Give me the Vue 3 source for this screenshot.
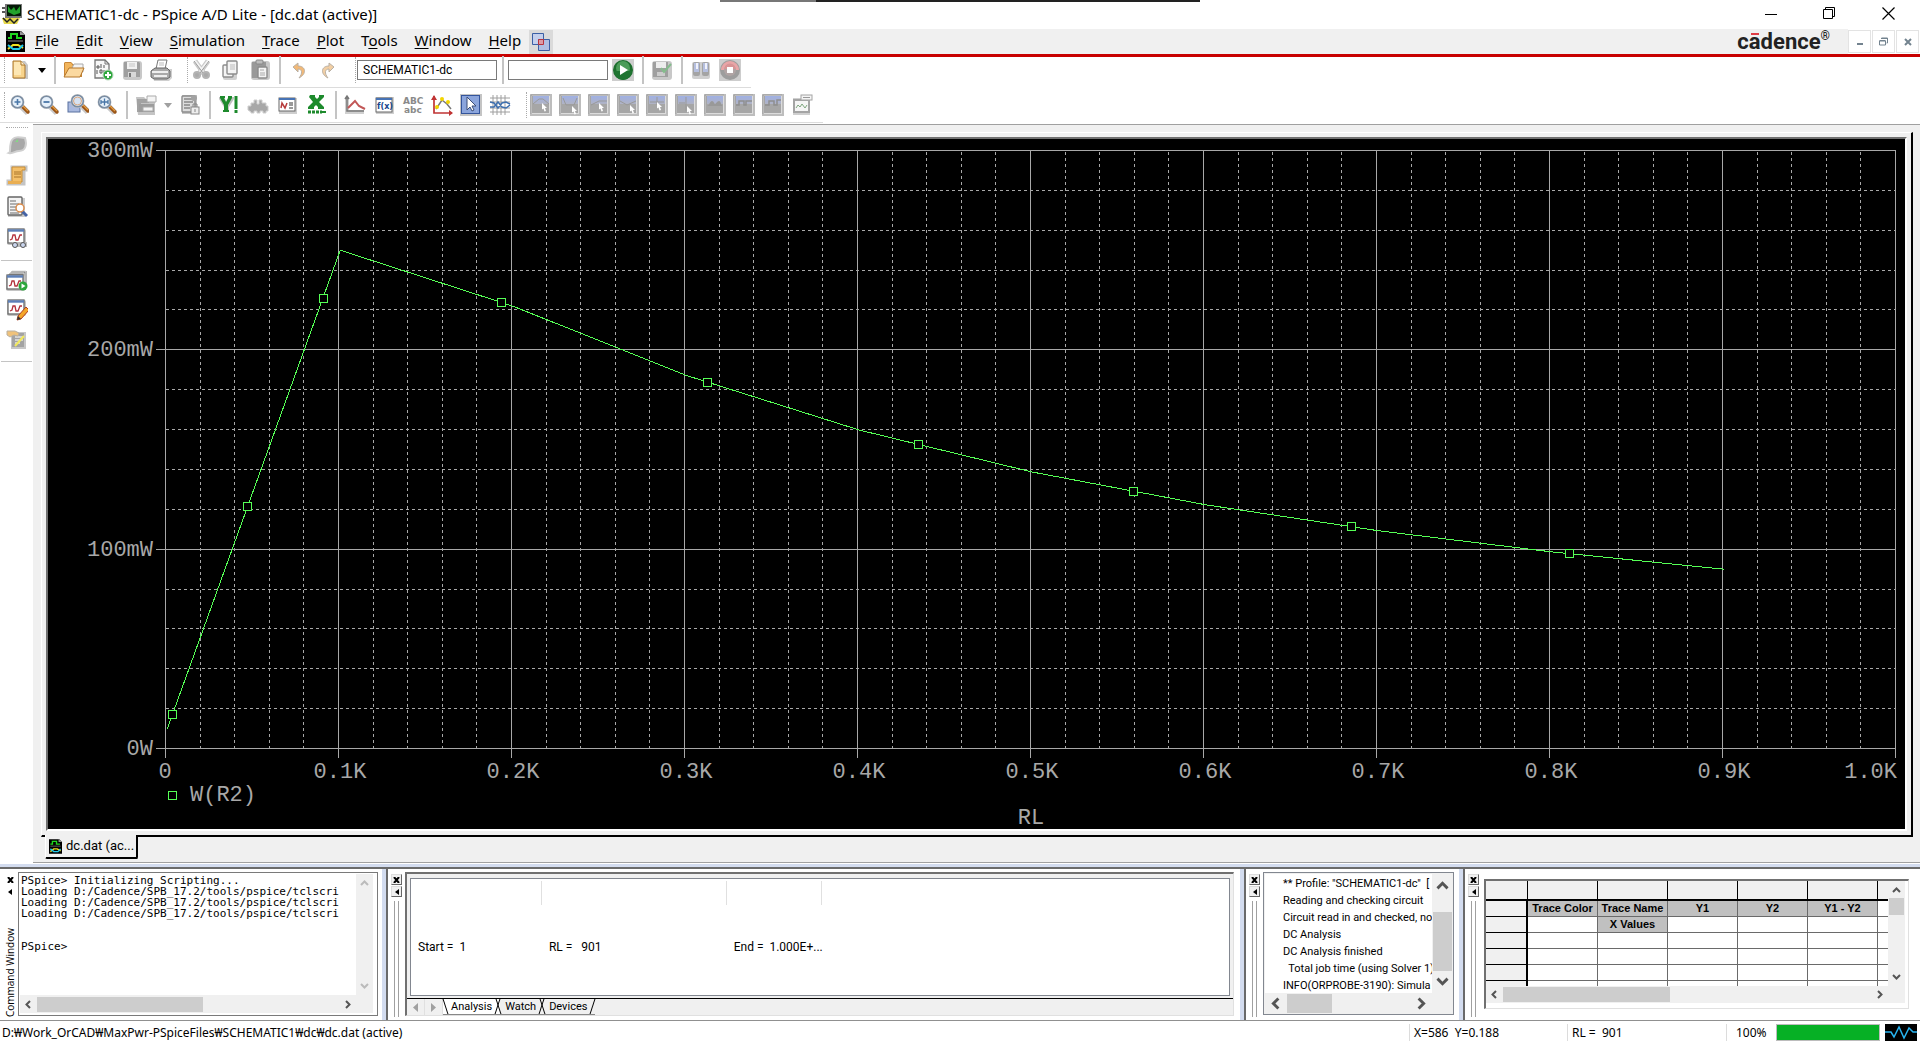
<script setup>
const menus = [
  ['', 'F', 'ile'], ['', 'E', 'dit'], ['', 'V', 'iew'], ['', 'S', 'imulation'], ['', 'T', 'race'],
  ['', 'P', 'lot'], ['T', 'o', 'ols'], ['', 'W', 'indow'], ['', 'H', 'elp']
]

const glass = '<path d="M12 12l7 7" stroke="#c9c9c9" stroke-width="6"/><path d="M13 12l6 6" stroke="#9a5518" stroke-width="3.4" stroke-linecap="round"/><path d="M14 12l5 5" stroke="#e39a3e" stroke-width="1.2"/><circle cx="8.500" cy="8" r="7" fill="#cfcfcf"/><circle cx="8.500" cy="8" r="5.800" fill="#e6f0fa" stroke="#7a8da3" stroke-width="1.600"/>'
const sheet = (x, y, w, h, f = '#f4f4f4', s = '#8c8c8c') => `<rect x="${x}" y="${y}" width="${w}" height="${h}" rx="1" fill="${f}" stroke="${s}" stroke-width="1.4"/>`
const wave = (x, y) => `<path d="M${x} ${y + 5}l2 -1l1 -4h2l1 5l2 0l2 -5l2 0" fill="none" stroke="#b3323c" stroke-width="1.3"/>`
const scope = (x, y) => `<rect x="${x - 1}" y="${y}" width="19" height="16" rx="2" fill="#c4c4c4"/><rect x="${x}" y="${y}" width="16" height="14" fill="#fff" stroke="#6b6b6b" stroke-width="1.3"/><path d="M${x} ${y + 1.5}h16" stroke="#5c7fb8" stroke-width="2.4"/>` + wave(x + 2, y + 6)
const cursorBox = (d) => `<rect width="22" height="22" fill="#bdbdbd"/><rect x="1.500" y="1.500" width="18" height="18" fill="#a6a6a6" stroke="#dcdcdc"/><path d="M1 1v19M1 1h19" stroke="#999"/><rect x="3" y="2" width="16" height="8" fill="url(#sky)"/>${d}`
const pointer = (x, y) => `<path d="M${x} ${y}l5 5h-2l1 3l-1.500 .5l-1 -3l-1.500 1z" fill="#fff"/>`

const icons = {
  blank: '<path d="M5 2h11l3 4v14h-14z" fill="#c8c8c8"/><path d="M4 2h8l4 4v13h-12z" fill="#f8d48c" stroke="#a8742c"/><path d="M5 3h6l1 3v10h-7z" fill="#fde7b4"/><path d="M12 2v4h4" fill="#fff3d6" stroke="#a8742c"/>',
  open: '<path d="M1 18V4l1 -1h6l2 2h9v13z" fill="#c98737"/><path d="M2 17V4h6l2 3h8v10z" fill="#f2b55c"/><path d="M9 9l2 -4h9v8z" fill="#f4f4f4" stroke="#aaa"/><path d="M1 18l5 -9h15l-4 9z" fill="#fbd9a0" stroke="#b5762b"/>',
  add: '<path d="M3 1h10l4 4v14h-14z" fill="#f7f7f7" stroke="#777" stroke-width="1.3"/><path d="M13 1v4h4" fill="none" stroke="#777"/><path d="M5 7h2v2h-2zM9 5v4M12 6v3M5 11v4M8 11h2v3h-2zM12 11v4" stroke="#555" fill="none"/><circle cx="16" cy="16" r="5" fill="#2da63c" stroke="#b9d9bd"/><path d="M16 13v6M13 16h6" stroke="#fff" stroke-width="2"/>',
  save: '<rect x="2" y="2" width="19" height="19" rx="3" fill="#c8c8c8"/><path d="M3 3h15l1 1v14h-16z" fill="#9f9f9f"/><path d="M6 3h10v7h-10z" fill="#f1f1f1"/><path d="M7 13h8v5h-8z" fill="#d8d8d8"/><path d="M8 14h2v4h-2z" fill="#777"/><path d="M8 5h6M8 7h6" stroke="#c5c5c5"/>',
  print: '<path d="M2 10h20v9l-3 3h-15z" fill="#cfcfcf"/><path d="M8 1h9l-2 9h-9z" fill="#fff" stroke="#777"/><path d="M9 4h5M9 6h5" stroke="#bbb"/><path d="M1 12l4 -3h12l3 3v6l-3 2h-13l-3 -2z" fill="#a9a9a9" stroke="#666"/><path d="M2 12h16v2h-16z" fill="#eee"/><path d="M4 17h13" stroke="#eee" stroke-width="2"/>',
  cut: '<path d="M4 2l10 14M17 2l-10 14" stroke="#c9c9c9" stroke-width="5"/><path d="M4 2l9 12M17 2l-9 12" stroke="#f4f4f4" stroke-width="2.500"/><path d="M3 2l9 12M18 2l-9 12" stroke="#999"/><circle cx="6" cy="16" r="3" fill="#aaa" stroke="#b4b4b4" stroke-width="2"/><circle cx="15" cy="16" r="3" fill="#aaa" stroke="#b4b4b4" stroke-width="2"/>',
  copy: '<rect x="3" y="6" width="14" height="15" rx="2" fill="#d0d0d0"/>' + sheet(3, 6, 10, 12) + sheet(7, 2, 10, 13) + '<path d="M10 6h5M10 8h5M10 10h5" stroke="#bbb"/>',
  paste: '<rect x="2" y="2" width="19" height="19" rx="3" fill="#c8c8c8"/><rect x="3" y="3" width="14" height="16" fill="#999"/><rect x="7" y="1" width="7" height="4" rx="1" fill="#bdbdbd" stroke="#888"/>' + sheet(9, 8, 9, 11) + '<path d="M11 11h4M11 14h5M11 16h5" stroke="#aaa"/>',
  undo: '<path d="M10 4l-5 4l5 5v-3c4 0 5 4 1 9c8 -4 7 -12 -1 -12z" fill="#f2b978" stroke="#b9b0a4"/>',
  redo: '<path d="M12 4l5 4l-5 5v-3c-4 0 -5 4 -1 9c-8 -4 -7 -12 1 -12z" fill="#f2cfa4" stroke="#b9b0a4"/>',
  run: '<rect width="22" height="22" fill="#cdcdcd"/><circle cx="11" cy="11" r="10" fill="#1c6e2d"/><circle cx="11" cy="9" r="7" fill="#4c9c59"/><path d="M2 12a9 9 0 0 0 18 0z" fill="#1f7431"/><path d="M8 6l8 5l-8 5z" fill="#fff"/>',
  check: '<rect x="1" y="2" width="20" height="19" rx="3" fill="#c8c8c8"/><path d="M2 3h15v15h-15z" fill="#9f9f9f"/><path d="M5 3h10v6h-10z" fill="#ededed"/><path d="M6 13h8v4h-8z" fill="#ccc"/><path d="M10 9l3 4l7 -8" fill="none" stroke="#84bd8c" stroke-width="2"/>',
  pause: '<rect x="2" y="3" width="18" height="17" rx="2" fill="#cfcfcf"/><rect x="3" y="3" width="7" height="14" rx="2" fill="#a4a4a4"/><rect x="12" y="3" width="7" height="14" rx="2" fill="#a4a4a4"/><path d="M4 4h5v9h-5zM13 4h5v9h-5z" fill="#b5bfdf"/><path d="M6 4h2v6h-2zM15 4h2v6h-2z" fill="#f1f3fb"/>',
  stop: '<rect width="22" height="22" fill="#cdcdcd"/><circle cx="11" cy="11" r="10" fill="#9d9d9d"/><path d="M2 11a9 9 0 0 1 18 0z" fill="#e9a5a7"/><circle cx="11" cy="11" r="6" fill="#b0a4a4"/><path d="M5.500 10a5.500 5.500 0 0 1 11 0z" fill="#d99496"/><rect x="8" y="8" width="6" height="6" fill="#fff"/>',
  zin: glass + '<path d="M8.500 5v6M5.500 8h6" stroke="#4a77a8" stroke-width="1.600"/>',
  zout: glass + '<path d="M5.500 8h6" stroke="#4a77a8" stroke-width="1.800"/>',
  zarea: '<rect x="1" y="8" width="12" height="10" fill="#a9b9df" stroke="#58709f"/>' + '<g transform="translate(2 -1)">' + glass + '<circle cx="8.500" cy="8" r="4" fill="#d6e2f2" stroke="#d98b4b" stroke-width=".7"/></g>',
  zfit: glass + '<path d="M5 8h7M8.500 4.500v7M5 6v4M12 6v4" stroke="#4a77a8" stroke-width="1.300"/>',
  scroll: '<path d="M1 3h8l2 2h9v16h-17z" fill="#c4c4c4"/><path d="M2 5h12v4h-8v9h-4z" fill="#a2a2a2"/><path d="M4 10h15v8h-15z" fill="#9c9c9c"/><path d="M12 2h9v6h-9z" fill="#f4f4f4" stroke="#aaa"/><path d="M8 13h10v4h-10z" fill="#f4f4f4" stroke="#aaa"/>',
  lock: '<path d="M3 1h15v19h-15z" fill="#c4c4c4"/>' + sheet(3, 2, 13, 16, '#ddd') + '<path d="M5 5h9M5 8h9M5 11h6M5 14h6" stroke="#888" stroke-width="1.5"/><circle cx="15" cy="4" r="3" fill="#a2a2a2"/><rect x="12" y="13" width="8" height="7" fill="#eee" stroke="#888"/><path d="M14 13v-3h4v3M16 15v3" fill="none" stroke="#888"/>',
  ymark: '<path d="M1 3h6v2l2 4l2 -4v-2h5v2l-5 8v5h-5v-5l-5 -8z" fill="#c2c2c2"/><path d="M2 2h5v2h-1l2 4l2 -4v-2h4v2l-4 7v5h1v2h-6v-2h1v-5l-4 -7z" fill="#1d8a2c"/><path d="M18 2v13" stroke="#1d8a2c" stroke-width="3"/><path d="M18 16v3" stroke="#1d8a2c" stroke-width="3"/>',
  hill: '<path d="M1 16v-4h3v-3h3v-3h3v4h2v-4h3v3h4v3h2v5h-2v2h-3v-2h-3v2h-3v-2h-3v2h-3v-1z" fill="#a8a8a8" stroke="#cfcfcf"/>',
  ncalc: '<rect x="3" y="4" width="18" height="16" fill="#cecece"/><rect x="3" y="4" width="16" height="13" fill="#fff" stroke="#666"/><path d="M3 5h16" stroke="#4773b5" stroke-width="2"/><path d="M5 14l1 -5l3 5l2 -5" fill="none" stroke="#b73b3b" stroke-width="1.500"/><path d="M13 9h4M13 11h4M13 14h4" stroke="#333"/>',
  xmark: '<path d="M5 1h5v2l2 2l2 -2v-2h5v2l-5 5l5 5v2h-6v-2l-2 -2l-2 2v2h-6v-2l5 -5l-4 -5z" fill="#1d8a2c"/><path d="M3 18h14" stroke="#1d8a2c" stroke-width="3" stroke-dasharray="3 1"/><path d="M17 18h4" stroke="#1d8a2c" stroke-width="2"/>',
  trace: '<path d="M3 4v14h17" fill="none" stroke="#d0d0d0" stroke-width="4"/><path d="M3 3v14h17M1 5l2 -3l2 3" fill="none" stroke="#777" stroke-width="1.500"/><path d="M4 14l7 -7l4 5l6 3" fill="none" stroke="#c25757" stroke-width="2"/>',
  abc: '<g font-family="DejaVu Sans" font-weight="bold" fill="#8a8a8a"><text x="1" y="10" font-size="9">ABC</text><text x="2" y="19" font-size="9">abc</text></g>',
  fx: '<rect x="3" y="3" width="18" height="17" fill="#cfcfcf"/><rect x="3" y="4" width="16" height="14" fill="#fff" stroke="#666"/><path d="M3 5h16" stroke="#4773b5" stroke-width="2"/><text x="4" y="15" font-size="8" font-weight="bold" font-family="DejaVu Sans" fill="#17478e">f(x)</text>',
  mark: '<path d="M3 2v17h18" fill="none" stroke="#c03434" stroke-width="1.700"/><path d="M0 6l3 -5l3 5zM18 16l4 3l-4 3z" fill="#c03434"/><path d="M5 15l6 -9l5 4l4 5" fill="none" stroke="#777" stroke-width="1.500"/><circle cx="6" cy="13" r="2" fill="#f3d500"/><circle cx="11" cy="5" r="2" fill="#f3d500"/><circle cx="17" cy="8" r="2" fill="#f3d500"/>',
  cursor: '<rect width="22" height="22" fill="#c4c4c4"/><rect x="1.500" y="1.500" width="18" height="18" fill="#8ba5dc" stroke="#33549b"/><path d="M7 3v13l3 -3l2 4l2 -1l-2 -4h4z" fill="#fff" stroke="#3a4d77"/>',
  grid: '<path d="M4 1v20M8 1v20M12 1v20M16 1v20M1 4h20M1 8h20M1 14h20M1 18h20" stroke="#9e9e9e"/><path d="M1 8l4 1l4 5l4 -5l4 -1l4 2M1 13l4 0l4 -5l4 5l4 1l4 -3" fill="none" stroke="#3e6fae" stroke-width="1.500"/>',
  cur0: cursorBox('<path d="M3 10l6 -5h4l6 5" fill="none" stroke="#999"/>' + pointer(12, 9)),
  cur1: cursorBox('<path d="M4 4l3 7h8l3 -7" fill="none" stroke="#999"/>' + pointer(13, 12)),
  cur2: cursorBox('<path d="M3 11l8 -4h8" fill="none" stroke="#999"/>' + pointer(11, 9)),
  cur3: cursorBox('<path d="M3 7l7 4l9 -4" fill="none" stroke="#999"/>' + pointer(13, 11)),
  cur4: cursorBox('<path d="M4 8h14M11 3v8" fill="none" stroke="#999"/>' + pointer(11, 8)),
  cur5: cursorBox('<path d="M11 3v14M4 9h6" fill="none" stroke="#999"/>' + pointer(12, 12)),
  cur6: cursorBox('<path d="M3 12c2 0 3 -5 5 -5s2 3 3 3s2 -3 4 -3s2 5 4 5" fill="#999"/>'),
  cur7: cursorBox('<path d="M3 11h3v-4h5v4h2v-4h6" fill="none" stroke="#8f8f8f" stroke-width="1.500"/>'),
  cur8: cursorBox('<path d="M3 11h4v-4h5v4h3v-5h4" fill="none" stroke="#8f8f8f" stroke-width="1.500"/>'),
  label: '<path d="M2 4h17v17h-17z" fill="#cfcfcf"/><rect x="3" y="6" width="15" height="12" fill="#f5f5f5" stroke="#a4a4a4" stroke-width="2"/><path d="M5 14l2 -3l2 2l2 -3l3 4l2 -3" fill="none" stroke="#7fa77f"/><rect x="10" y="1" width="11" height="5" fill="#f5f5f5" stroke="#a4a4a4"/><path d="M12 3.500h7" stroke="#999"/>',
  leaf: '<path d="M3 19c2 -1 0 -3 2 -11c2 -6 8 -5 14 -4c2 6 1 13 -6 13c-4 0 -6 3 -10 2z" fill="#a8a8a8" stroke="#d0d0d0" stroke-width="2"/><path d="M9 8l3 -3v3z" fill="#84d884"/>',
  parch: '<path d="M6 2h14v3h-2v14h-16v-3h4z" fill="#c4c4c4" stroke="#c4c4c4" stroke-width="3"/><path d="M6 2h13v3h-3v12h-10z" fill="#f4bf68" stroke="#c78d36"/><path d="M2 16h13v3h-13z" fill="#e9ae52"/><path d="M8 7h7M8 9h7M8 12h7" stroke="#a97528"/>',
  find: '<rect x="2" y="2" width="17" height="19" fill="#ccc"/>' + sheet(2, 1, 14, 18, '#f4f4f4', '#666') + '<path d="M4 5h6M4 8h9M4 11h7M4 14h7M4 17h9" stroke="#999" stroke-width="1.500"/><path d="M16 15l5 5" stroke="#4463a5" stroke-width="3"/><circle cx="14" cy="12" r="4" fill="#fff" stroke="#d98b4b" stroke-width="1.500"/>',
  view: scope(2, 2) + '<path d="M6 15h15v5h-13z" fill="#bbb"/><circle cx="9" cy="18" r="2.500" fill="#cad5ee" stroke="#555"/><circle cx="17" cy="18" r="2.500" fill="#cad5ee" stroke="#555"/>',
  sims: '<path d="M1 7l5 -5h15v14l-3 3h-17z" fill="#8c8c8c"/><path d="M4 4h14v13M6 2h14v13" fill="none" stroke="#ddd"/>' + scope(1, 6) + '<circle cx="17" cy="17" r="4.500" fill="#2da63c"/><path d="M15.500 14.500l4 2.500l-4 2.500z" fill="#fff"/>',
  edit: scope(2, 1) + '<path d="M11 21l1 -4l8 -9l3 3l-8 9z" fill="#f4a62a" stroke="#b13f22"/><path d="M11 21l1 -4l3 3z" fill="#333"/>',
  notes: '<path d="M5 3h15v17h-15z" fill="#c7c7c7"/><path d="M6 4h12v14h-12z" fill="#a3a3a3"/><path d="M9 8h8M9 11h8M9 14h5" stroke="#e4e4e4" stroke-width="1.500"/><path d="M1 2h8l4 2l-1 3l-4 -1l-4 2l-3 -2z" fill="#f0c27a" stroke="#b8b0a2"/><path d="M9 17l9 -10" stroke="#f2e95c" stroke-width="2"/>'
}

const fileTools = ['blank', '>', '|', 'open', 'add', 'save', 'print', ':', 'cut', 'copy', 'paste', '|', 'undo', 'redo']
const plotTools = ['zin', 'zout', 'zarea', 'zfit', '|', 'scroll', '>>', 'lock', '|', 'ymark', 'hill', 'ncalc', 'xmark', '|', 'trace', 'fx', 'abc', 'mark', 'cursor', 'grid', ':', 'cur0', 'cur1', 'cur2', 'cur3', 'cur4', 'cur5', 'cur6', 'cur7', 'cur8', 'label']
const sideTools = ['leaf', 'parch', 'find', 'view', '-', 'sims', 'edit', 'notes', '-']

const left = 117, base = 609, perStep = 173, perHundred = 598 / 3
const px = (r) => left + (r * perStep) / 100
const py = (mw) => base - (mw * perHundred) / 100
const minorX = Array.from({ length: 50 }, (_, i) => i).filter((i) => i % 5).map((i) => Math.round(px(i * 20)) + 0.5)
const minorY = Array.from({ length: 15 }, (_, i) => i).filter((i) => i % 5).map((i) => Math.round(py(i * 20)) + 0.5)
const majorX = Array.from({ length: 11 }, (_, i) => Math.round(px(i * 100)) + 0.5)
const majorY = [0, 1, 2, 3].map((i) => ({ y: Math.round(py(i * 100)) + 0.5, label: i ? i + '00mW' : '0W' }))
const xLabels = Array.from({ length: 9 }, (_, i) => ({ x: px((i + 1) * 100) + 2, label: `0.${i + 1}K` }))
const curve = Array.from({ length: 10 }, (_, i) => 1 + i * 100)
  .map((r) => `${px(r) + 0.5},${py((100000 * r) / (r + 100) ** 2) + 0.5}`).join(' ')
const markers = [[124, 575], [199, 367], [275, 159], [453, 163], [659, 243], [870, 305], [1085, 352], [1303, 387], [1521, 414], [124, 656]]

const consoleText = `PSpice> Initializing Scripting...
Loading D:/Cadence/SPB_17.2/tools/pspice/tclscri
Loading D:/Cadence/SPB_17.2/tools/pspice/tclscri
Loading D:/Cadence/SPB_17.2/tools/pspice/tclscri


PSpice>`
const log = ['** Profile: "SCHEMATIC1-dc"  [', 'Reading and checking circuit', 'Circuit read in and checked, no', 'DC Analysis', 'DC Analysis finished', '  Total job time (using Solver 1)', 'INFO(ORPROBE-3190): Simula']
</script>

<template>
  <div class="app">
    <svg class="defs" width="0" height="0" aria-hidden="true">
      <linearGradient id="sky" x2="0" y2="1"><stop offset="0" stop-color="#9fb0e4" /><stop offset="1" stop-color="#b0b3c4" /></linearGradient>
      <symbol id="doc" viewBox="0 0 19 21">
        <path d="M0 0h15l4 4v17h-19z" fill="#000" /><path d="M14 0v4h5" fill="#999" />
        <path d="M2 7h3v-4h6v4h5" fill="none" stroke="#1fd61f" stroke-width="2" />
        <path d="M2 10h15" stroke="#888" /><path d="M2 18l5 -4h5l5 3" fill="none" stroke="#f0e020" stroke-width="2" />
        <path d="M2 14l5 4h6l4 -4" fill="none" stroke="#20c8e8" stroke-width="2" />
      </symbol>
      <symbol id="up" viewBox="0 0 9 6"><path d="M1 5l3.500 -3.500l3.500 3.500" fill="none" stroke="currentColor" stroke-width="2" /></symbol>
      <symbol id="down" viewBox="0 0 9 6"><path d="M1 1l3.500 3.500l3.500 -3.500" fill="none" stroke="currentColor" stroke-width="2" /></symbol>
      <symbol id="prev" viewBox="0 0 6 9"><path d="M5 1l-3.500 3.500l3.500 3.500" fill="none" stroke="currentColor" stroke-width="2" /></symbol>
      <symbol id="next" viewBox="0 0 6 9"><path d="M1 1l3.500 3.500l-3.500 3.500" fill="none" stroke="currentColor" stroke-width="2" /></symbol>
      <symbol id="cross" viewBox="0 0 7 6"><path d="M1 0l5 6M6 0l-5 6" stroke="#000" stroke-width="2" /></symbol>
      <symbol id="tri" viewBox="0 0 4 6"><path d="M4 0v6l-4 -3z" fill="#000" /></symbol>
    </svg>

    <header class="title">
      <svg width="20" height="20" viewBox="0 0 20 20"><rect x="3" y="0" width="17" height="14" fill="#777" /><rect x="5" y="1" width="14" height="11" fill="#041a06" /><path d="M6 2l3 4l3 -3l2 4l4 -5v7l-6 2l-6 -3z" fill="#22a32b" /><path d="M0 14h18l-3 6h-13z" fill="#e6d84a" /><path d="M1 14l4 4l3 -3l4 4l4 -4M0 4h3M0 8h3" stroke="#222" stroke-width="1.500" fill="none" /></svg>
      <h1>SCHEMATIC1-dc - PSpice A/D Lite - [dc.dat (active)]</h1>
      <i class="edge"></i>
      <div class="winctl">
        <button aria-label="Minimize"><svg width="12" height="12"><path d="M0 6.500h12" stroke="#000" /></svg></button>
        <button aria-label="Restore"><svg width="13" height="13" fill="none" stroke="#000"><path d="M.5 2.500h9v9h-9zM2.500 2v-1.500h9v9h-2" /></svg></button>
        <button aria-label="Close"><svg width="13" height="13"><path d="M.5 .5l12 12M12.500 .5l-12 12" stroke="#000" stroke-width="1.200" /></svg></button>
      </div>
    </header>

    <nav class="menu">
      <svg width="19" height="21"><use href="#doc" /></svg>
      <button v-for="m in menus" :key="m[1] + m[2]">{{ m[0] }}<u>{{ m[1] }}</u>{{ m[2] }}</button>
      <button class="stack" aria-label="Cascade"><svg width="18" height="18" stroke="#3b5fa5"><path d="M.5 .5h11v11h-11z" fill="#c3cfec" /><path d="M6.500 6.500h11v11h-11z" fill="#b0bee2" /><path d="M6.500 6.500h5v5h-5z" fill="#dc9aa5" stroke="#b8323c" /></svg></button>
      <div class="brand">c<span>a</span>dence<sup>®</sup></div>
      <div class="docctl">
        <button aria-label="Minimize document"><svg width="8" height="8"><path d="M1 6h6" stroke="#73838f" stroke-width="2" /></svg></button>
        <button aria-label="Restore document"><svg width="9" height="9" fill="none" stroke="#73838f"><path d="M.5 4h6v4h-6zM2.500 2v-1h6v5h-1M.5 3.500h6M2.500 1.500h6" /></svg></button>
        <button aria-label="Close document"><svg width="8" height="8"><path d="M1 1l6 6M7 1l-6 6" stroke="#73838f" stroke-width="2" /></svg></button>
      </div>
    </nav>

    <div class="bars">
      <div class="bar first">
        <i class="grip"></i>
        <template v-for="(t, i) in fileTools" :key="i">
          <i v-if="t === '|'" class="sep"></i><i v-else-if="t === ':'" class="grip mid"></i><i v-else-if="t[0] === '>'" class="caret"></i>
          <button v-else class="tool" :aria-label="t"><svg width="22" height="22" v-html="icons[t]"></svg></button>
        </template>
        <i class="grip field"></i>
        <input class="profile" aria-label="Profile" value="SCHEMATIC1-dc">
        <i class="sep tight"></i>
        <input class="until" aria-label="Run to time">
        <button class="tool" aria-label="Run"><svg width="22" height="22" v-html="icons.run"></svg></button>
        <i class="sep"></i>
        <button class="tool" aria-label="Check point"><svg width="22" height="22" v-html="icons.check"></svg></button>
        <i class="sep"></i>
        <button class="tool" aria-label="Pause"><svg width="22" height="22" v-html="icons.pause"></svg></button>
        <button class="tool" aria-label="Stop"><svg width="22" height="22" v-html="icons.stop"></svg></button>
      </div>
      <div class="bar second">
        <i class="grip"></i>
        <template v-for="(t, i) in plotTools" :key="i">
          <i v-if="t === '|'" class="sep"></i><i v-else-if="t === ':'" class="grip mid"></i><i v-else-if="t[0] === '>'" class="caret" :class="{ dim: t === '>>' }"></i>
          <button v-else class="tool" :aria-label="t"><svg width="22" height="22" v-html="icons[t]"></svg></button>
        </template>
      </div>
    </div>

    <main class="main">
      <aside class="side">
        <i class="hgrip"></i>
        <template v-for="(t, i) in sideTools" :key="i">
          <i v-if="t === '-'" class="hsep"></i>
          <button v-else class="tool" :aria-label="t"><svg width="22" height="22" v-html="icons[t]"></svg></button>
        </template>
      </aside>
      <section class="work">
        <div class="frame">
          <div class="canvas">
            <svg class="plot" viewBox="0 0 1857 690">
              <rect width="1857" height="690" fill="#000" />
              <g stroke="#a8a8a8" shape-rendering="crispEdges" fill="none">
                <g stroke-dasharray="3 3">
                  <path v-for="x in minorX" :key="x" :d="`M${x} 13V609`" />
                  <path v-for="y in minorY" :key="y" :d="`M118 ${y}H1847`" />
                </g>
                <path v-for="x in majorX" :key="x" :d="`M${x} 11V619`" />
                <path v-for="m in majorY" :key="m.y" :d="`M108 ${m.y}H1848`" />
              </g>
              <g class="axis">
                <text v-for="m in majorY" :key="m.y" x="105" :y="m.y + 6" text-anchor="end">{{ m.label }}</text>
                <text x="117" y="639" text-anchor="middle">0</text>
                <text v-for="l in xLabels" :key="l.label" :x="l.x" y="639" text-anchor="middle">{{ l.label }}</text>
                <text x="1849" y="639" text-anchor="end">1.0K</text>
                <text x="983" y="685" text-anchor="middle">RL</text>
                <text x="142" y="662">W(R2)</text>
              </g>
              <polyline :points="curve" fill="none" stroke="#55ff55" shape-rendering="crispEdges" />
              <rect v-for="(m, i) in markers" :key="i" :x="m[0] - 3.5" :y="m[1] - 3.5" width="8" height="8" fill="#000" stroke="#55ff55" />
            </svg>
          </div>
        </div>
        <button class="doctab"><svg width="13" height="15"><use href="#doc" /></svg>dc.dat (ac...</button>
      </section>
    </main>

    <div class="split"></div>

    <div class="docks">
      <section class="dock cmd">
        <div class="handle plain">
          <button aria-label="Close"><svg width="7" height="6"><use href="#cross" /></svg></button>
          <button aria-label="Collapse"><svg width="4" height="6"><use href="#tri" /></svg></button>
          <span>Command Window</span>
        </div>
        <div class="console">
          <pre>{{ consoleText }}</pre>
          <div class="vs pale"><svg width="9" height="6"><use href="#up" /></svg><svg width="9" height="6"><use href="#down" /></svg></div>
          <div class="hs"><svg width="6" height="9"><use href="#prev" /></svg><i></i><svg width="6" height="9"><use href="#next" /></svg></div>
          <div class="hs"></div>
        </div>
      </section>

      <section class="dock out">
        <div class="handle">
          <button aria-label="Close"><svg width="7" height="6"><use href="#cross" /></svg></button>
          <button aria-label="Collapse"><svg width="4" height="6"><use href="#tri" /></svg></button><i></i>
        </div>
        <div class="panel">
          <div class="list">
            <div class="cell c1"><i></i>Start =&nbsp; 1</div>
            <div class="cell c2"><i></i>RL =&nbsp;&nbsp; 901</div>
            <div class="cell c3"><i></i>End =&nbsp; 1.000E+...</div>
          </div>
          <div class="tabs">
            <button class="nav" aria-label="Previous tab"><svg width="5" height="9"><path d="M5 0v9l-5 -4.500z" fill="#a0a0a0" /></svg></button>
            <button class="nav" aria-label="Next tab"><svg width="5" height="9"><path d="M0 0v9l5 -4.500z" fill="#a0a0a0" /></svg></button>
            <button class="tab on">Analysis</button><button class="tab">Watch</button><button class="tab">Devices</button>
          </div>
        </div>
      </section>

      <section class="dock log">
        <div class="handle">
          <button aria-label="Close"><svg width="7" height="6"><use href="#cross" /></svg></button>
          <button aria-label="Collapse"><svg width="4" height="6"><use href="#tri" /></svg></button><i></i>
        </div>
        <div class="logbox">
          <div class="lines"><p v-for="l in log" :key="l">{{ l }}</p></div>
          <div class="vs"><svg width="13" height="9"><use href="#up" /></svg><i></i><svg width="13" height="9"><use href="#down" /></svg></div>
          <div class="hs"><svg width="9" height="13"><use href="#prev" /></svg><i></i><svg width="9" height="13"><use href="#next" /></svg></div>
        </div>
      </section>

      <section class="dock vals">
        <div class="handle">
          <button aria-label="Close"><svg width="7" height="6"><use href="#cross" /></svg></button>
          <button aria-label="Collapse"><svg width="4" height="6"><use href="#tri" /></svg></button><i></i>
        </div>
        <div class="gridbox">
          <div class="clip">
            <table>
              <colgroup><col class="rowcol"><col v-for="n in 6" :key="n"></colgroup>
              <tbody>
                <tr class="head"><th v-for="n in 7" :key="n"></th></tr>
                <tr><th></th><td class="g">Trace Color</td><td class="g">Trace Name</td><td class="g">Y1</td><td class="g">Y2</td><td class="g">Y1 - Y2</td><td></td></tr>
                <tr><th></th><td></td><td class="g">X Values</td><td></td><td></td><td></td><td></td></tr>
                <tr v-for="n in 4" :key="n"><th></th><td v-for="k in 6" :key="k"></td></tr>
              </tbody>
            </table>
          </div>
          <div class="vs"><svg width="9" height="6"><use href="#up" /></svg><i></i><svg width="9" height="6"><use href="#down" /></svg></div>
          <div class="hs"><svg width="6" height="9"><use href="#prev" /></svg><i></i><svg width="6" height="9"><use href="#next" /></svg></div>
          <div class="hs"></div>
        </div>
      </section>
    </div>

    <footer class="status">
      <span class="path">D:₩Work_OrCAD₩MaxPwr-PSpiceFiles₩SCHEMATIC1₩dc₩dc.dat (active)</span>
      <span class="pos">X=586&nbsp; Y=0.188</span>
      <span class="rl">RL =&nbsp; 901</span>
      <span class="pct">100%</span>
      <span class="done"></span>
      <svg width="32" height="17"><rect width="32" height="17" fill="#000" /><path d="M0 8h6l3 5l5 -10l5 11l5 -10l4 4h4" fill="none" stroke="#28b4f0" stroke-width="1.500" /></svg>
    </footer>
  </div>
</template>

<style>
body { margin: 0; background: #fff; }
</style>

<style scoped>
.app { display: flex; flex-direction: column; min-height: 100vh; background: #fff; color: #000; font: 12px/16px Roboto, "Liberation Sans", sans-serif; overflow: hidden; }
.app * { box-sizing: border-box; }
.app svg { display: block; flex: none; }
.defs { position: absolute; }
button { background: none; border: 0; padding: 0; margin: 0; font: inherit; color: inherit; }
input { font: inherit; border: 1px solid #7a7a7a; border-radius: 0; background: #fff; height: 20px; padding: 0 5px; margin: 0; }

.title { position: relative; display: flex; align-items: center; height: 29px; padding: 0 2px 2px; }
.title h1 { flex: 1; margin: 0 0 0 5px; font: 400 15px/26px "Noto Sans", sans-serif; }
.edge { position: absolute; top: 0; left: 37.5%; width: 25%; height: 2px; background: linear-gradient(90deg, #777 20%, #222 20%); }
.winctl { display: flex; }
.winctl button { display: flex; width: 58px; height: 27px; align-items: center; justify-content: center; }
.winctl button:last-child { width: 60px; }

.menu { display: flex; align-items: center; height: 28px; padding-left: 6px; background: #f0f0f0; border-bottom: 3px solid #c80000; font: 15px/24px "Noto Sans", sans-serif; }
.menu > button { margin-left: 17px; padding-bottom: 3px; }
.menu > svg + button { margin-left: 10px; }
.menu u { text-underline-offset: 2px; }
.menu .stack { display: flex; align-items: center; justify-content: center; width: 24px; height: 24px; margin-left: 8px; padding: 0; background: #dadada; }
.brand { margin-left: auto; font: 700 22px/22px Roboto, sans-serif; color: #222; display: flex; }
.brand span { position: relative; }
.brand span::before { content: ""; position: absolute; left: 2px; right: 2px; top: 2px; height: 2px; background: #e03c44; }
.brand sup { font: 700 12px/10px Roboto, sans-serif; }
.docctl { display: flex; align-self: stretch; margin-left: 18px; padding-right: 1px; gap: 1px; background: #fff; }
.docctl button { display: flex; align-items: center; justify-content: center; width: 23px; height: 23px; margin-top: 1px; border: 1px solid #e3e3e3; background: #fff; }

.bars { height: 67px; }
.bar { display: flex; align-items: center; gap: 7px; padding-left: 4px; width: max-content; border-bottom: 1px solid #dcdcdc; }
.bar.first { height: 31px; padding-right: 10px; padding-bottom: 4px; }
.bar.second { height: 35px; padding-right: 10px; }
.bar .grip { margin-right: -3px; }
.grip { width: 1px; height: 26px; border-left: 1px dotted #aaa; }
.bar .grip.mid { margin-left: 8px; margin-right: -4px; }
.bar .grip.field { margin-left: 9px; margin-right: -6px; }
.sep { width: 2px; height: 28px; margin-left: 1px; background: #c4c4c4; }
.sep.tight { margin: 0 -3px 0 -2px; }
.caret { width: 8px; border: 4px solid transparent; border-top: 5px solid #000; border-bottom: 0; }
.caret.dim { border-top-color: #a0a0a0; }
.tool { width: 22px; height: 22px; flex: none; }
.profile { width: 140px; }
.until { width: 100px; margin-right: -3px; }

.main { display: flex; }
.side { display: flex; flex-direction: column; align-items: center; width: 33px; flex: none; }
.hgrip { width: 22px; margin: 3px 0 6px; border-top: 1px dotted #aaa; }
.side .tool { margin-bottom: 9px; }
.hsep { width: 31px; height: 1px; margin: 2px 0 8px; background: #c4c4c4; }
.hsep ~ .tool { margin-bottom: 8px; }
.work { flex: 1; min-width: 0; padding: 7px 7px 0 8px; background: #f0f0f0; border-top: 1px solid #a0a0a0; border-bottom: 1px solid #a0a0a0; height: 100%; }
.frame { padding: 4px 4px 4px 4px; border: 1px solid #fff; border-right: 2px solid #000; border-bottom: 2px solid #000; }
.canvas { border: 2px solid #fff; border-top-color: #707070; border-left-color: #707070; }
.plot { width: 100%; height: auto; }
.axis { font: 22px "Liberation Mono", monospace; fill: #a8a8a8; }
.doctab { position: relative; display: flex; align-items: center; gap: 4px; width: 93px; height: 24px; margin: -2px 0 3px 4px; padding-left: 3px; background: #f0f0f0; border: 1px solid #fff; border-top: 0; border-right: 2px solid #000; border-bottom: 2px solid #000; border-radius: 0 0 2px 2px; font-size: 13px; white-space: nowrap; }

.split { height: 6px; border-top: 1px solid #fff; border-bottom: 2px solid #6a6a6a; background: #d3dcef; }

.docks { display: grid; grid-template-columns: minmax(0, 386fr) minmax(0, 858fr) minmax(0, 219fr) minmax(0, 457fr); height: 151px; font-size: 11px; }
.dock { display: flex; border-right: 4px solid #d3dcef; border-left: 2px solid #6a6a6a; padding: 3px; }
.dock.cmd { border-left: 0; padding: 3px 4px 3px 2px; }
.dock.vals { border-right: 0; }
.handle { display: flex; flex-direction: column; align-items: center; width: 11px; margin: 2px 3px 0 0; flex: none; }
.handle button { display: flex; align-items: center; justify-content: center; width: 11px; height: 11px; margin-bottom: 1px; background: #f0f0f0; border: 1px solid #ddd; border-right-color: #666; border-bottom-color: #666; }
.handle i { flex: 1; width: 5px; margin-top: 3px; border: 1px solid #a0a0a0; border-width: 0 1px; }
.handle.plain { width: 16px; margin-right: 0; }
.handle.plain button { border: 0; background: none; }
.handle span { writing-mode: vertical-rl; transform: rotate(180deg); margin-top: auto; font: 10px/12px "Open Sans", sans-serif; white-space: nowrap; }

.vs, .hs { display: flex; align-items: center; background: #f0f0f0; color: #555; }
.vs { flex-direction: column; }
.vs i, .hs i { background: #cdcdcd; }
.console { flex: 1; min-width: 0; display: grid; grid-template: 121px 18px / minmax(0, 1fr) 17px; border: 1px solid #7a7a7a; padding: 1px 4px 1px 1px; margin-bottom: 1px; background: #fff; }
.console pre { margin: 0; padding: 1px 0 0 1px; overflow: hidden; font: 11px/11px "DejaVu Sans Mono", monospace; }
.vs.pale { color: #bbb; justify-content: space-between; padding: 6px 0; }
.console .hs { padding: 0 5px; justify-content: space-between; }
.console .hs i { width: 51%; height: 15px; margin: 0 auto 0 6px; }

.panel { flex: 1; min-width: 0; display: flex; flex-direction: column; background: #f0f0f0; border: 1px solid #e0e0e0; border-top: 2px solid #707070; border-left: 2px solid #707070; margin-right: 3px; margin-bottom: 1px; }
.list { display: flex; align-items: stretch; flex: 1; margin: 4px 3px 2px; background: #fff; border: 1px solid #828790; }
.cell { position: relative; display: flex; align-items: center; padding: 20px 0 0 7px; white-space: nowrap; font-size: 12px; }
.cell i { position: absolute; top: 2px; right: 0; height: 24px; border-right: 1px solid #e0e0e0; }
.c1 { width: 16%; }
.c2 { width: 22.6%; }
.c3 { width: 11.6%; }
.tabs { display: flex; height: 17px; align-items: stretch; border-top: 1px solid #000; }
.nav { display: flex; width: 18px; align-items: center; justify-content: center; border-right: 1px solid #e0e0e0; }
.tab { position: relative; padding: 0 8px; height: 16px; border-bottom: 1px solid #888; line-height: 15px; }
.tab + .tab { margin-left: -4px; padding-left: 9px; }
.tab::before, .tab::after { content: ""; position: absolute; top: 0; bottom: 0; width: 1px; background: #000; }
.tab::before { left: 2px; transform: skewX(18deg); }
.tab::after { right: 2px; transform: skewX(-18deg); }
.tab.on { background: #fff; }

.logbox { flex: 1; min-width: 0; display: grid; grid-template: 119px 1fr / minmax(0, 1fr) 20px; background: #f0f0f0; border: 1px solid #828790; margin: 0 2px 2px 0; padding: 1px; }
.lines { background: #fff; overflow: hidden; padding: 1px 0 0 18px; }
.lines p { margin: 0; line-height: 17px; white-space: pre; }
.logbox .vs { padding: 7px 0; }
.logbox .vs i { width: 19px; height: 59px; margin: 22px 0 auto; }
.logbox .hs { padding: 0 6px; }
.logbox .hs i { width: 45px; height: 19px; margin: 0 auto 0 7px; }

.vals .handle { margin-right: 5px; }
.gridbox { flex: 1; min-width: 0; display: grid; grid-template: 105px 17px / minmax(0, 1fr) 17px; align-content: start; height: 130px; margin: 7px 8px 0 0; padding-right: 3px; border: 1px solid #e0e0e0; border-top: 2px solid #707070; border-left: 2px solid #707070; background: #fff; }
.clip { overflow: hidden; }
table { table-layout: fixed; width: 462px; border-collapse: separate; border-spacing: 0; font: 700 11px/15px "Liberation Sans", sans-serif; }
col { width: 70px; }
.rowcol { width: 42px; }
th, td { height: 16px; padding: 0; border-right: 1px solid #6a6a6a; border-bottom: 1px solid #6a6a6a; text-align: center; white-space: nowrap; }
th { background: #f0f0f0; border-right: 2px solid #000; border-bottom: 1px solid #000; }
.head th { height: 20px; border-bottom: 2px solid #000; border-right: 1px solid #000; }
td.g { background: #c0c0c0; }
.gridbox .vs { padding: 6px 0 6px; }
.gridbox .vs i { width: 15px; height: 17px; margin: 5px 0 auto; }
.gridbox .hs { padding: 0 5px; }
.gridbox .hs i { width: 167px; height: 15px; margin: 0 auto 0 6px; }

.status { display: flex; align-items: center; height: 23px; padding: 2px 3px 0 2px; border-top: 1px solid #909090; border-bottom: 1px solid #dcdcdc; font: 12px/17px "Noto Sans", "Noto Sans CJK KR", sans-serif; white-space: nowrap; }
.path { flex: 1; }
.pos, .rl, .pct { border-left: 1px solid #dcdcdc; padding-left: 4px; }
.pos { width: 158px; }
.rl { width: 159px; }
.pct { width: 50px; padding-left: 9px; }
.done { width: 104px; height: 17px; margin-right: 5px; background: #06b025; border: 1px solid #bcbcbc; }
</style>
